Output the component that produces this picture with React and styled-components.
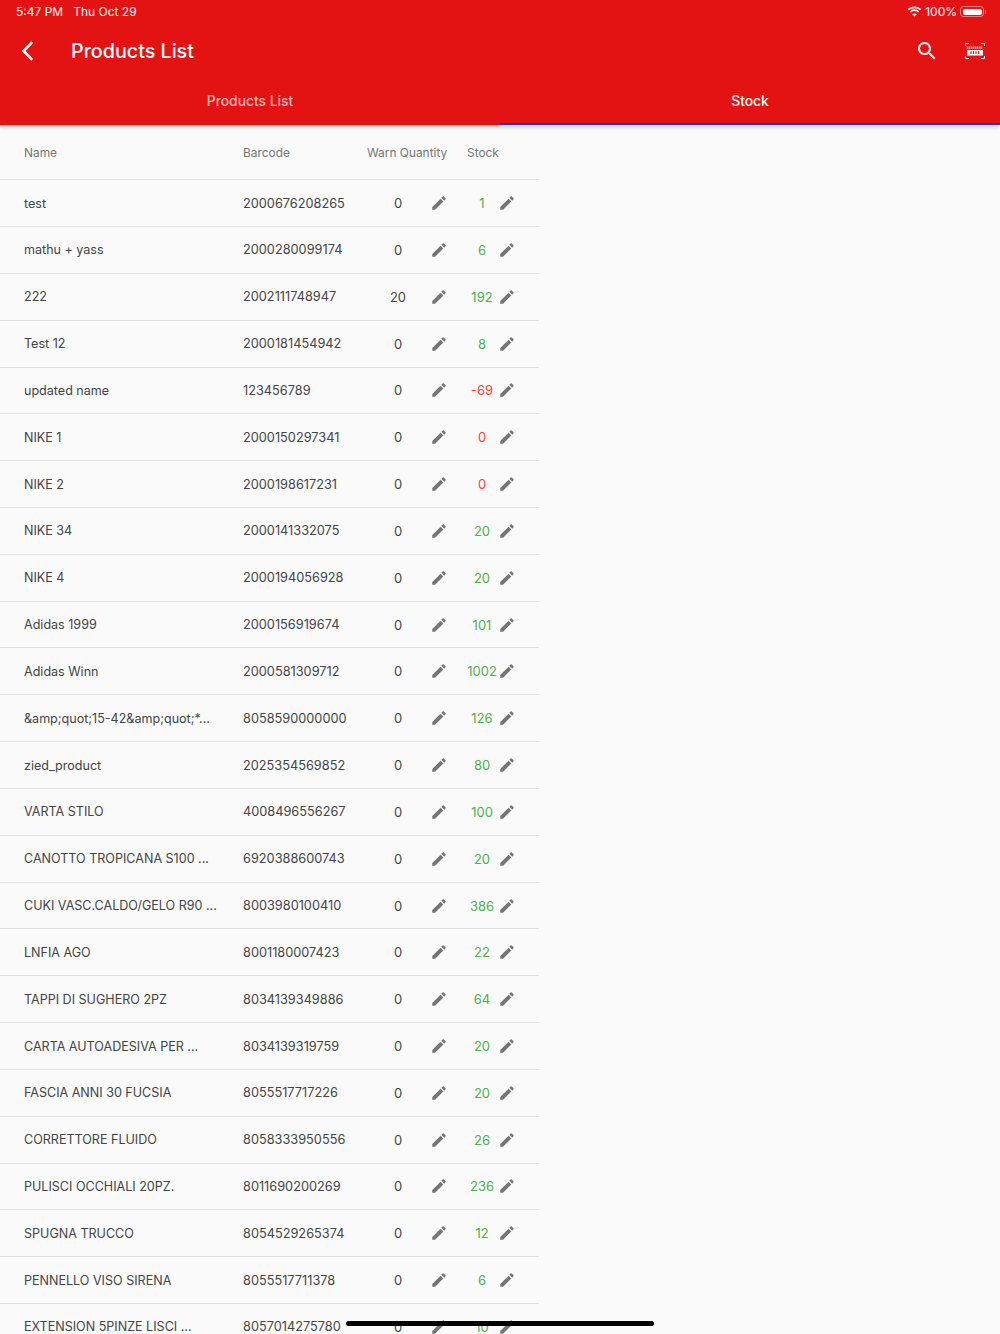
import React from "react";
import styled, { createGlobalStyle } from "styled-components";

const Global = createGlobalStyle`
  html, body { margin: 0; padding: 0; height: 1334px; overflow: hidden; background: #fafafa; }
  body { font-family: Inter, "Noto Sans", sans-serif; }
  #root { height: 1334px; }
`;

const Page = styled.div`
  position: relative;
  width: 1000px;
  height: 1334px;
  overflow: hidden;
  background: #fafafa;
`;

const AppBar = styled.header`
  position: relative;
  z-index: 1;
  height: 125px;
  background: #e41313;
  color: #fff;
  box-shadow: 0 2px 4px rgba(0, 0, 0, 0.22);
`;

const StatusBar = styled.div`
  height: 23px;
  padding: 0 14px 0 16px;
  box-sizing: border-box;
  display: flex;
  align-items: center;
  justify-content: space-between;
  font-size: 12px;
`;

const StatusGroup = styled.div`
  display: flex;
  align-items: center;
  gap: ${(p) => p.$gap || 4}px;
`;

const TitleBar = styled.div`
  height: 55px;
  display: flex;
  align-items: center;
  padding: 0 13px 0 16px;
`;

const Title = styled.h1`
  margin: 0 0 0 31px;
  font-size: 19.7px;
  font-weight: 500;
  flex: 1;
`;

const Actions = styled.div`
  display: flex;
  align-items: center;
  gap: 24px;
`;

const Tabs = styled.div`
  height: 47px;
  display: flex;
`;

const Tab = styled.div`
  flex: 1;
  display: flex;
  align-items: center;
  justify-content: center;
  box-sizing: border-box;
  font-size: 13.85px;
  font-weight: 500;
  color: ${(p) => (p.$active ? "#fff" : "rgba(255,255,255,.7)")};
  border-bottom: 2px solid ${(p) => (p.$active ? "#3131a8" : "transparent")};
`;

const Table = styled.div`
  width: 539px;
`;

const Columns = `
  display: grid;
  grid-template-columns: 243px 124px 62px 38px 30px 20px;
  align-items: center;
  box-sizing: border-box;
  padding-right: 22px;
`;

const HeadRow = styled.div`
  ${Columns}
  height: 55.2px;
  border-bottom: 1px solid #e0e0e0;
  font-size: 11.9px;
  color: #757575;
`;

const HeadCell = styled.div`
  white-space: nowrap;
  padding-left: ${(p) => p.$pad || 0}px;
  grid-column: ${(p) => p.$span || "auto"};
`;

const Row = styled.div`
  ${Columns}
  height: 46.83px;
  border-bottom: 1px solid #e0e0e0;
  font-size: 13px;
  color: #444;
`;

const Name = styled.div`
  padding-left: 24px;
  font-size: 12.55px;
  white-space: nowrap;
`;

const Barcode = styled.div`
  font-size: 12.75px;
`;

const Num = styled.div`
  text-align: center;
  white-space: nowrap;
`;

const Stock = styled(Num)`
  color: ${(p) => (p.$low ? "#f44336" : "#4caf50")};
`;

const PencilSlot = styled.div`
  display: flex;
  justify-content: center;
  justify-self: ${(p) => (p.$start ? "start" : "center")};
  width: 20px;
  height: 18px;
`;

const HomeBar = styled.div`
  position: absolute;
  left: 346px;
  bottom: 8px;
  width: 308px;
  height: 5px;
  border-radius: 3px;
  background: #000;
`;

const Pencil = () => (
  <svg width="18" height="18" viewBox="0 0 24 24" fill="#757575">
    <path d="M3 17.25V21h3.75L17.81 9.94l-3.75-3.75L3 17.25zM20.71 7.04c.39-.39.39-1.02 0-1.41l-2.34-2.34c-.39-.39-1.02-.39-1.41 0l-1.83 1.83 3.75 3.75 1.83-1.83z" />
  </svg>
);

const Back = () => (
  <svg width="24" height="24" viewBox="0 0 24 24" fill="none" stroke="#fff" strokeWidth="2.6">
    <path d="M16.2 3.2 7.6 12l8.600 8.800" />
  </svg>
);

const Search = () => (
  <svg width="24" height="24" viewBox="0 0 24 24" fill="#fff">
    <path d="M15.5 14h-.79l-.28-.27C15.41 12.59 16 11.11 16 9.5 16 5.91 13.09 3 9.5 3S3 5.91 3 9.5 5.91 16 9.5 16c1.61 0 3.09-.59 4.23-1.57l.27.28v.79l5 4.99L20.49 19l-4.99-5zm-6 0C7.01 14 5 11.99 5 9.5S7.01 5 9.5 5 14 7.01 14 9.5 11.99 14 9.5 14z" />
  </svg>
);

const Scan = () => (
  <svg width="24" height="24" viewBox="0 0 24 24" fill="none" stroke="#fff">
    <path d="M2.500 7V4.500H6M18 4.500h3.500V7M2.500 17v2.500H6M18 19.500h3.500V17" strokeWidth="1" />
    <path d="M4.500 7.500v2.500M6.500 7.500v2.500M8.500 7.500v2.500M10.500 7.500v2.500M12.500 7.500v2.500M14.500 7.500v2.500M16.500 7.500v2.500M18.500 7.500v2.500" strokeWidth="1.300" />
    <path d="M4 11h16v5.500H4z" fill="#fff" stroke="none" />
    <path d="M8 12.300v2.600M10.500 12.300v2.600M13 12.300v2.600M15.500 12.300v2.600" stroke="#e41313" strokeWidth="1.200" />
  </svg>
);

const Wifi = () => (
  <svg width="15" height="11" viewBox="0 0 17 13" fill="none" stroke="#fff" strokeWidth="2">
    <path d="M1.200 4.300C5.300 .8 11.700 .8 15.800 4.300" />
    <path d="M3.700 6.900c2.800-2.300 6.800-2.300 9.600 0" />
    <path d="M8.500 12.500 5.800 9.700c1.500-1.200 3.900-1.200 5.400 0z" fill="#fff" stroke="none" />
  </svg>
);

const BatteryShell = styled.div`
  position: relative;
  width: 24px;
  height: 11px;
  padding: 1.500px;
  box-sizing: border-box;
  border: 1px solid rgba(255, 255, 255, 0.45);
  border-radius: 3.500px;
  margin-right: 2px;
  &::after {
    content: "";
    position: absolute;
    right: -3px;
    top: 2.500px;
    width: 1.500px;
    height: 4px;
    border-radius: 0 1px 1px 0;
    background: rgba(255, 255, 255, 0.5);
  }
`;

const BatteryFill = styled.div`
  width: 100%;
  height: 100%;
  border-radius: 2px;
  background: #fff;
`;

const products = [
  ["test", "2000676208265", "0", "1"],
  ["mathu + yass", "2000280099174", "0", "6"],
  ["222", "2002111748947", "20", "192"],
  ["Test 12", "2000181454942", "0", "8"],
  ["updated name", "123456789", "0", "-69"],
  ["NIKE 1", "2000150297341", "0", "0"],
  ["NIKE 2", "2000198617231", "0", "0"],
  ["NIKE 34", "2000141332075", "0", "20"],
  ["NIKE 4", "2000194056928", "0", "20"],
  ["Adidas 1999", "2000156919674", "0", "101"],
  ["Adidas Winn", "2000581309712", "0", "1002"],
  ["&amp;quot;15-42&amp;quot;*...", "8058590000000", "0", "126"],
  ["zied_product", "2025354569852", "0", "80"],
  ["VARTA STILO", "4008496556267", "0", "100"],
  ["CANOTTO TROPICANA S100 ...", "6920388600743", "0", "20"],
  ["CUKI VASC.CALDO/GELO R90 ...", "8003980100410", "0", "386"],
  ["LNFIA AGO", "8001180007423", "0", "22"],
  ["TAPPI DI SUGHERO 2PZ", "8034139349886", "0", "64"],
  ["CARTA AUTOADESIVA PER ...", "8034139319759", "0", "20"],
  ["FASCIA ANNI 30 FUCSIA", "8055517717226", "0", "20"],
  ["CORRETTORE FLUIDO", "8058333950556", "0", "26"],
  ["PULISCI OCCHIALI 20PZ.", "8011690200269", "0", "236"],
  ["SPUGNA TRUCCO", "8054529265374", "0", "12"],
  ["PENNELLO VISO SIRENA", "8055517711378", "0", "6"],
  ["EXTENSION 5PINZE LISCI ...", "8057014275780", "0", "10"],
];

export default function App() {
  return (
    <Page>
      <Global />
      <AppBar>
        <StatusBar>
          <StatusGroup $gap={10}>
            <span>5:47 PM</span>
            <span>Thu Oct 29</span>
          </StatusGroup>
          <StatusGroup $gap={3}>
            <Wifi />
            <span>100%</span>
            <BatteryShell>
              <BatteryFill />
            </BatteryShell>
          </StatusGroup>
        </StatusBar>
        <TitleBar>
          <Back />
          <Title>Products List</Title>
          <Actions>
            <Search />
            <Scan />
          </Actions>
        </TitleBar>
        <Tabs>
          <Tab>Products List</Tab>
          <Tab $active>Stock</Tab>
        </Tabs>
      </AppBar>
      <Table>
        <HeadRow>
          <HeadCell $pad={24}>Name</HeadCell>
          <HeadCell>Barcode</HeadCell>
          <HeadCell $span="3 / span 2">Warn Quantity</HeadCell>
          <HeadCell $span="5 / span 2">Stock</HeadCell>
        </HeadRow>
        {products.map(([name, code, warn, stock]) => (
          <Row key={code}>
            <Name>{name}</Name>
            <Barcode>{code}</Barcode>
            <Num>{warn}</Num>
            <PencilSlot $start>
              <Pencil />
            </PencilSlot>
            <Stock $low={Number(stock) <= 0}>{stock}</Stock>
            <PencilSlot>
              <Pencil />
            </PencilSlot>
          </Row>
        ))}
      </Table>
      <HomeBar />
    </Page>
  );
}
